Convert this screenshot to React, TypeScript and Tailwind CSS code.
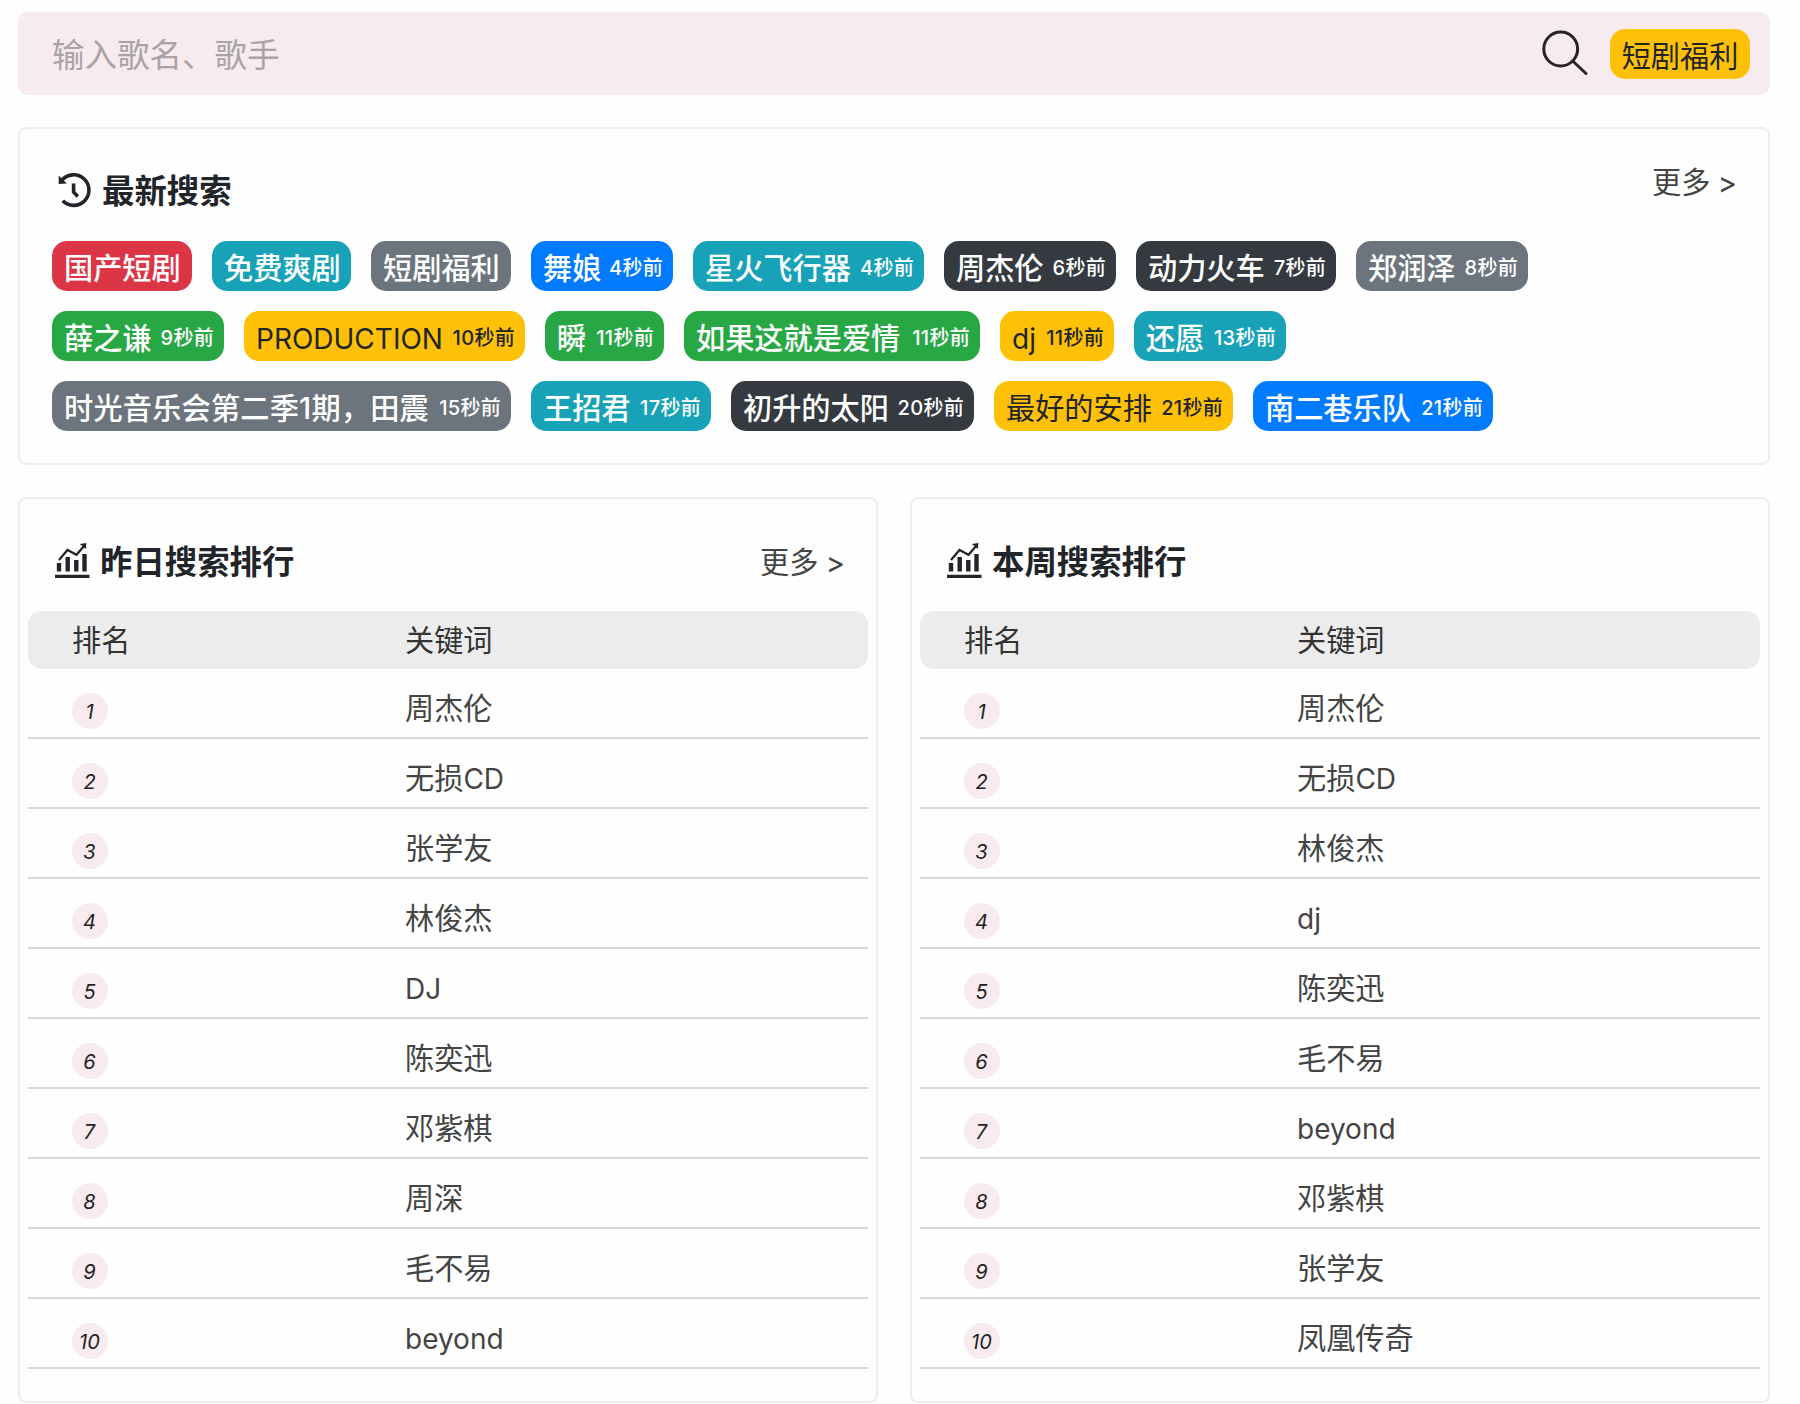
import React from 'react';

interface Tag {
  name: string;
  time?: string;
  color: string;
  width: string;
}

const RED = 'bg-[#dc3545] text-white font-medium';
const TEAL = 'bg-[#17a2b8] text-white font-medium';
const GRAY = 'bg-[#6c757d] text-white font-medium';
const BLUE = 'bg-[#007bff] text-white font-medium';
const DARK = 'bg-[#343a40] text-white font-medium';
const GREEN = 'bg-[#28a745] text-white font-medium';
const YELLOW = 'bg-[#ffc107] text-[#212529]';

const tagRows: Tag[][] = [
  [
    { name: '国产短剧', color: RED, width: 'w-[140px]' },
    { name: '免费爽剧', color: TEAL, width: 'w-[139px]' },
    { name: '短剧福利', color: GRAY, width: 'w-[140px]' },
    { name: '舞娘', time: '4秒前', color: BLUE, width: 'w-[142px]' },
    { name: '星火飞行器', time: '4秒前', color: TEAL, width: 'w-[231px]' },
    { name: '周杰伦', time: '6秒前', color: DARK, width: 'w-[172px]' },
    { name: '动力火车', time: '7秒前', color: DARK, width: 'w-[200px]' },
    { name: '郑润泽', time: '8秒前', color: GRAY, width: 'w-[172px]' },
  ],
  [
    { name: '薛之谦', time: '9秒前', color: GREEN, width: 'w-[172px]' },
    { name: 'PRODUCTION', time: '10秒前', color: YELLOW, width: 'w-[281px]' },
    { name: '瞬', time: '11秒前', color: GREEN, width: 'w-[119px]' },
    { name: '如果这就是爱情', time: '11秒前', color: GREEN, width: 'w-[296px]' },
    { name: 'dj', time: '11秒前', color: YELLOW, width: 'w-[114px]' },
    { name: '还愿', time: '13秒前', color: TEAL, width: 'w-[152px]' },
  ],
  [
    { name: '时光音乐会第二季1期，田震', time: '15秒前', color: GRAY, width: 'w-[459px] tracking-[0.2px]' },
    { name: '王招君', time: '17秒前', color: TEAL, width: 'w-[180px]' },
    { name: '初升的太阳', time: '20秒前', color: DARK, width: 'w-[243px]' },
    { name: '最好的安排', time: '21秒前', color: YELLOW, width: 'w-[239px]' },
    { name: '南二巷乐队', time: '21秒前', color: BLUE, width: 'w-[240px]' },
  ],
];

const yesterday = ['周杰伦', '无损CD', '张学友', '林俊杰', 'DJ', '陈奕迅', '邓紫棋', '周深', '毛不易', 'beyond'];
const thisWeek = ['周杰伦', '无损CD', '林俊杰', 'dj', '陈奕迅', '毛不易', 'beyond', '邓紫棋', '张学友', '凤凰传奇'];

const SearchIcon = () => (
  <svg className="h-[48px] w-[48px]" viewBox="0 0 48 48" fill="none" stroke="#2b2228" strokeWidth="3" strokeLinecap="round">
    <circle cx="18.7" cy="19" r="16.9" />
    <path d="M30.7 31 L44 43.5" />
  </svg>
);

const HistoryIcon = () => (
  <svg className="h-[36px] w-[34px]" viewBox="0 0 34 36" fill="none" stroke="#212529" strokeWidth="3.6">
    <path d="M4 8.2 A15.3 15.3 0 1 1 4.7 28.8" />
    <path d="M15.6 11.5 V20 L19.8 24.5" />
    <path d="M0.7 3.5 V12 L8.8 11.5 Z" fill="#212529" stroke="none" />
  </svg>
);

const ChartIcon = () => (
  <svg className="mb-1 h-[36px] w-[35px]" viewBox="0 0 35 36" fill="none" stroke="#212529">
    <path d="M0 33.4 H34.5" strokeWidth="3.2" />
    <path d="M4 20 V28.5 M12.7 14 V28.5 M21.3 17 V28.5 M29.5 11 V28.5" strokeWidth="4.4" />
    <path d="M4 17 L12.5 7 L21.5 11.8 L29.5 2.5" strokeWidth="2.2" />
    <path d="M24.8 1 L31.3 0 L31 6 Z" fill="#212529" stroke="none" />
  </svg>
);

// Latin runs are set slightly smaller than the Chinese glyphs around them
const Mixed = ({ text }: { text: string }) => (
  <span className="whitespace-nowrap">
    {text.split(/([A-Za-z]+)/).map((part, i) =>
      /[A-Za-z]/.test(part) ? (
        <span key={i} className="text-[28px]">{part}</span>
      ) : (
        part
      )
    )}
  </span>
);

const Badge = ({ tag }: { tag: Tag }) => (
  <span
    className={`flex h-[50px] shrink-0 items-center justify-between rounded-[15px] pt-[5px] pr-[10px] pl-3 text-[29.2px] leading-none whitespace-nowrap ${tag.width} ${tag.color}`}
  >
    <Mixed text={tag.name} />
    {tag.time && <span className="-mt-[2px] text-[20px] font-medium tracking-[0.3px]">{tag.time}</span>}
  </span>
);

const More = () => (
  <a className="text-[29.2px] leading-none whitespace-nowrap text-[#444] [word-spacing:-1px]">更多 &gt;</a>
);

const RankPanel = ({ title, items, more }: { title: string; items: string[]; more?: boolean }) => (
  <section className="h-[906px] rounded-lg border-2 border-[#eeeeee] px-2">
    <div className="flex h-[112px] items-center justify-between pt-[16px] pr-[23px] pl-[27px]">
      <h2 className="flex items-center gap-[10px] text-[32.4px] leading-none font-bold text-[#212529]">
        <ChartIcon />
        <span>{title}</span>
      </h2>
      {more && <More />}
    </div>
    <div className="flex h-[58px] items-center rounded-[14px] bg-[#ececec] pt-[2px] pl-[44px] text-[29.2px] leading-none text-[#333]">
      <div className="w-[333px]">排名</div>
      <div>关键词</div>
    </div>
    <ul>
      {items.map((item, i) => (
        <li key={item} className="flex h-[70px] items-center border-b-2 border-[#d9d9d9] pt-[12px] pl-[44px]">
          <div className="w-[333px]">
            <i className="mt-[4px] flex h-[36px] w-[36px] items-center justify-center rounded-full bg-[#f8ebef] pt-[2px] pr-[1px] text-[20px] leading-none text-[#222]">
              {i + 1}
            </i>
          </div>
          <div className="text-[29.2px] leading-none text-[#444]">
            <Mixed text={item} />
          </div>
        </li>
      ))}
    </ul>
  </section>
);

const App: React.FC = () => {
  return (
    <div className="h-[1404px] w-[1800px] overflow-hidden bg-[#fefefe] pt-[12px] pr-[30px] pl-[18px] font-['Inter','Noto_Sans_CJK_SC',sans-serif]">
      {/* Search bar */}
      <div className="flex h-[83px] items-center rounded-[10px] bg-[#f8ebef] pr-[20px] pl-[34px]">
        <span className="flex-1 pt-[5px] text-[32.5px] leading-none text-[#a8a3a5]">输入歌名、歌手</span>
        <SearchIcon />
        <span className="ml-[20px] flex h-[50px] w-[140px] items-center justify-center rounded-[15px] bg-[#ffc107] pt-[6px] text-[29.2px] leading-none text-[#212529]">
          短剧福利
        </span>
      </div>

      {/* Latest searches */}
      <section className="mt-[32px] h-[338px] rounded-lg border-2 border-[#eeeeee] px-[32px]">
        <div className="flex h-[112px] items-center justify-between">
          <h2 className="flex items-center gap-[10px] pt-[10px] pl-[6px] text-[32.4px] leading-none font-bold text-[#212529]">
            <HistoryIcon />
            <span className="mt-[5px]">最新搜索</span>
          </h2>
          <div className="mr-[-1px] pb-[4px] leading-none">
            <More />
          </div>
        </div>
        <div className="flex flex-col gap-5">
          {tagRows.map((row, i) => (
            <div key={i} className="flex gap-5">
              {row.map((tag) => (
                <Badge key={tag.name} tag={tag} />
              ))}
            </div>
          ))}
        </div>
      </section>

      {/* Rankings */}
      <div className="mt-[32px] grid grid-cols-2 gap-8">
        <RankPanel title="昨日搜索排行" items={yesterday} more />
        <RankPanel title="本周搜索排行" items={thisWeek} />
      </div>
    </div>
  );
};

export default App;
